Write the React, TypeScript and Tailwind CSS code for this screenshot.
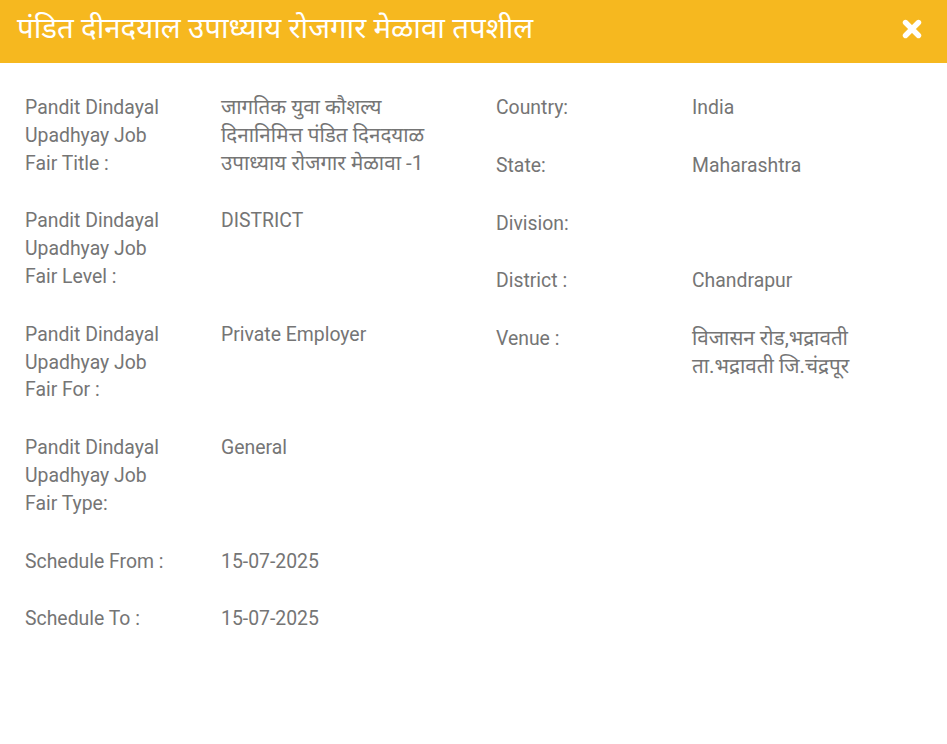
import React from "react";

function Row({ label, value }: { label: React.ReactNode; value: React.ReactNode }) {
  return (
    <div className="grid grid-cols-[196px_1fr] mb-[30px]">
      <div className="leading-[27.8px] whitespace-nowrap">{label}</div>
      <div className="leading-[27.8px]">{value}</div>
    </div>
  );
}

function Dev({ children }: { children: React.ReactNode }) {
  return <div className="block whitespace-nowrap text-[20.6px] leading-[27.8px]">{children}</div>;
}

export default function App() {
  return (
    <div className="w-[947px] h-[744px] bg-white text-[19.4px] text-[#757575] font-['Roboto','Noto_Sans_Devanagari',sans-serif]">
      <div className="h-[63px] bg-[#f6b81f] flex items-center justify-between pl-[17px] pr-[25px]">
        <div className="text-white text-[29.4px] leading-none pb-[5px] whitespace-nowrap">
          पंडित दीनदयाल उपाध्याय रोजगार मेळावा तपशील
        </div>
        <svg width="20" height="20" viewBox="0 0 20 20" className="mb-[5px]">
          <path d="M3.5 3.5 L16.5 16.5 M16.5 3.5 L3.5 16.5" stroke="white" strokeWidth="5.4" strokeLinecap="round" />
        </svg>
      </div>
      <div className="flex pt-[31px] pl-[25px]">
        <div className="w-[471px] shrink-0">
          <Row
            label={<>Pandit Dindayal<br />Upadhyay Job<br />Fair Title :</>}
            value={<Dev>जागतिक युवा कौशल्य<br />दिनानिमित्त पंडित दिनदयाळ<br />उपाध्याय रोजगार मेळावा -1</Dev>}
          />
          <Row label={<>Pandit Dindayal<br />Upadhyay Job<br />Fair Level :</>} value="DISTRICT" />
          <Row label={<>Pandit Dindayal<br />Upadhyay Job<br />Fair For :</>} value="Private Employer" />
          <Row label={<>Pandit Dindayal<br />Upadhyay Job<br />Fair Type:</>} value="General" />
          <Row label="Schedule From :" value="15-07-2025" />
          <Row label="Schedule To :" value="15-07-2025" />
        </div>
        <div className="flex-1">
          <Row label="Country:" value="India" />
          <Row label="State:" value="Maharashtra" />
          <Row label="Division:" value="" />
          <Row label="District :" value="Chandrapur" />
          <Row
            label="Venue :"
            value={<Dev>विजासन रोड,भद्रावती<br />ता.भद्रावती जि.चंद्रपूर</Dev>}
          />
        </div>
      </div>
    </div>
  );
}
